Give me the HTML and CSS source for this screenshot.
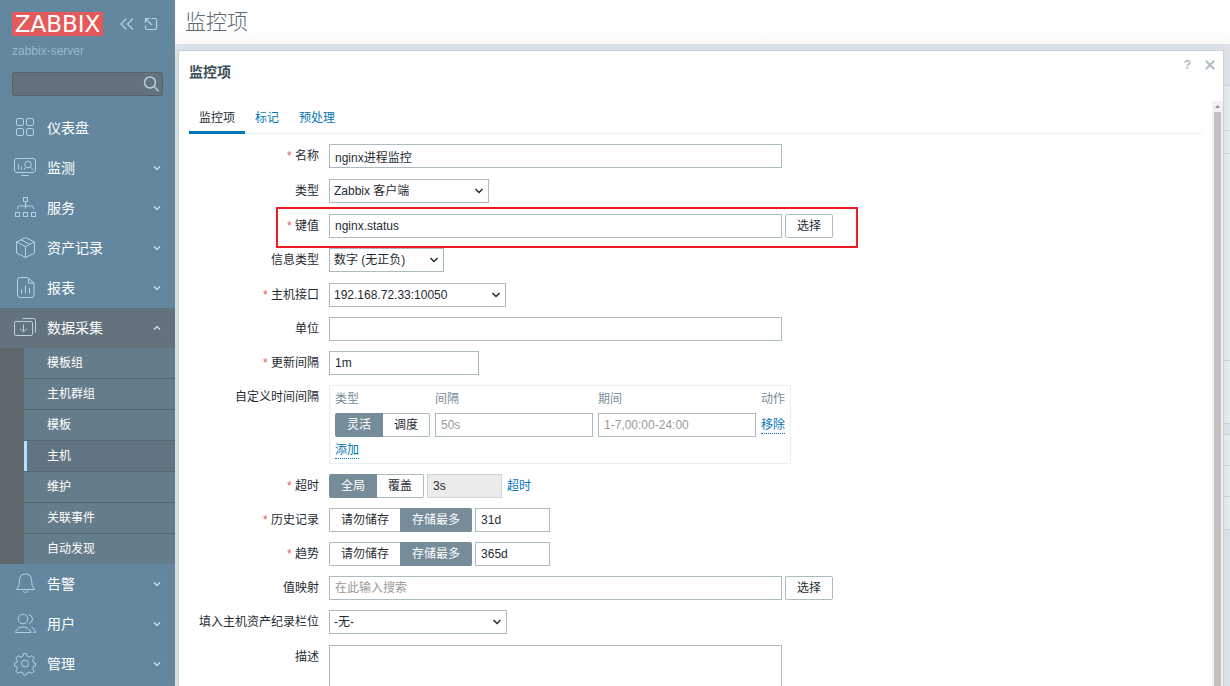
FILE: index.html
```html
<!DOCTYPE html>
<html lang="zh-CN">
<head>
<meta charset="utf-8">
<title>监控项</title>
<link rel="stylesheet" href="styles.css">
</head>
<body>
<div class="layout">
  <aside class="sidebar">
    <div class="brand">
      <a class="logo" href="#">ZABBIX</a>
      <button class="icon-btn" type="button" aria-label="收起侧栏"><svg width="16" height="16" viewBox="0 0 16 16"><path d="M7.500 2.500 2 8l5.500 5.500M14 2.500 8.500 8l5.500 5.500"/></svg></button>
      <button class="icon-btn" type="button" aria-label="隐藏侧栏"><svg width="16" height="16" viewBox="0 0 16 16"><path d="M8.500 2.500h3.500q1.500 0 1.500 1.500v8q0 1.500-1.500 1.500h-8q-1.500 0-1.500-1.500V9.500M9 9 2.500 2.500M2.500 7v-4.500h4.500"/></svg></button>
    </div>
    <div class="server">zabbix-server</div>
    <form class="search">
      <input type="text" aria-label="搜索">
      <button class="icon-btn" type="button" aria-label="搜索"><svg width="18" height="18" viewBox="0 0 18 18"><circle cx="8" cy="7.500" r="5.500"/><path d="m12 11.500 4.700 4.700"/></svg></button>
    </form>
    <nav>
      <ul class="menu">
        <li><a href="#"><svg class="ico" viewBox="0 1 24 24"><rect x="3.500" y="3.500" width="7" height="7" rx="1.500"/><rect x="13.500" y="3.500" width="7" height="7" rx="1.500"/><rect x="3.500" y="13.500" width="7" height="7" rx="1.500"/><rect x="13.500" y="13.500" width="7" height="7" rx="1.500"/></svg>仪表盘</a></li>
        <li><a href="#"><svg class="ico" viewBox="0 1 24 24"><rect x="1.500" y="3.500" width="21" height="14" rx="2.500"/><path d="M8.500 20.500h7M5.500 9v5.500M8.500 11.500v3M11.500 13v1.500"/><circle cx="15" cy="9.500" r="3.300"/><path d="m17.500 12 3 3"/></svg>监测<svg class="chev" viewBox="0 0 8 8"><path d="m1 2.500 3 3 3-3"/></svg></a></li>
        <li><a href="#"><svg class="ico" viewBox="0 1 24 24"><rect x="10.500" y="2.500" width="4" height="4"/><path d="M12.500 6.500v7M4.500 14v-1q0-2 2-2h12q2 0 2 2v1"/><rect x="2.500" y="17.500" width="4" height="4"/><rect x="10.500" y="17.500" width="4" height="4"/><rect x="18.500" y="17.500" width="4" height="4"/></svg>服务<svg class="chev" viewBox="0 0 8 8"><path d="m1 2.500 3 3 3-3"/></svg></a></li>
        <li><a href="#"><svg class="ico" viewBox="0 1 24 24"><path d="m12.500 2.500 9 4.500v11l-9 4.500-9-4.500V7zM3.500 7l9 4.500 9-4.500M12.500 11.500v11M8 4.800l9 4.500"/></svg>资产记录<svg class="chev" viewBox="0 0 8 8"><path d="m1 2.500 3 3 3-3"/></svg></a></li>
        <li><a href="#"><svg class="ico" viewBox="0 1 24 24"><path d="M14.500 2.500H7q-2.500 0-2.500 2.500v15q0 2.500 2.500 2.500h11.500q2.500 0 2.500-2.500V8zM15.500 3v5h5M8.500 14.500v4M12.500 10.500v8M16.500 13v5.500"/></svg>报表<svg class="chev" viewBox="0 0 8 8"><path d="m1 2.500 3 3 3-3"/></svg></a></li>
        <li class="open">
          <a href="#"><svg class="ico" viewBox="0 1 24 24"><rect x="1.500" y="6.500" width="18" height="14" rx="1.500"/><path d="M9.500 3.500h11q2 0 2 2V17.500M10.500 9.500v7.500M7 13.500l3.500 3.500 3.500-3.500"/></svg>数据采集<svg class="chev" viewBox="0 0 8 8"><path d="m1 5.500 3-3 3 3"/></svg></a>
          <ul class="submenu">
            <li><a href="#">模板组</a></li>
            <li><a href="#">主机群组</a></li>
            <li><a href="#">模板</a></li>
            <li class="current"><a href="#">主机</a></li>
            <li><a href="#">维护</a></li>
            <li><a href="#">关联事件</a></li>
            <li><a href="#">自动发现</a></li>
          </ul>
        </li>
        <li><a href="#"><svg class="ico" viewBox="0 1 24 24"><path d="M3.500 18.500q3-2.500 3-9 0-6.500 6-6.500t6 6.500q0 6.500 3 9zM10 20.500q2.500 2 5 0"/></svg>告警<svg class="chev" viewBox="0 0 8 8"><path d="m1 2.500 3 3 3-3"/></svg></a></li>
        <li><a href="#"><svg class="ico" viewBox="0 1 24 24"><circle cx="10" cy="8" r="4.800"/><path d="M2.500 21.500q1-5.500 7.500-5.500t8 5.500zM15.500 3.500q4 1 4 4.500t-3.500 4.500M18.500 16q3.500 1.500 4 5.500h-2"/></svg>用户<svg class="chev" viewBox="0 0 8 8"><path d="m1 2.500 3 3 3-3"/></svg></a></li>
        <li><a href="#"><svg class="ico" viewBox="0 0 24 24"><circle cx="12" cy="11.500" r="3.500"/><path d="M10.500 1.500h3l.8 2.800 2 .8 2.600-1.400 2.200 2.200-1.400 2.600.8 2 2 .5v3l-2 .5-.8 2 1.400 2.600-2.200 2.200-2.600-1.400-2 .8-.8 2.300h-3l-.8-2.300-2-.8-2.600 1.400-2.200-2.200 1.400-2.600-.8-2-2-.5v-3l2-.5.8-2-1.400-2.600 2.200-2.200 2.600 1.400 2-.8z" stroke-linejoin="round"/></svg>管理<svg class="chev" viewBox="0 0 8 8"><path d="m1 2.500 3 3 3-3"/></svg></a></li>
      </ul>
    </nav>
  </aside>

  <main class="page">
    <header class="page-head"><h1>监控项</h1></header>
    <div class="backdrop">
      <div class="panel panel-filter"><div></div><div></div><div></div><div></div></div>
      <div class="panel panel-list"><div></div><div></div><div></div></div>
    </div>

    <section class="dialog" role="dialog" aria-labelledby="dialog-title">
      <header class="dialog-head">
        <h2 id="dialog-title">监控项</h2>
        <button class="help" type="button" aria-label="帮助">?</button>
        <button class="close" type="button" aria-label="关闭"><svg width="10" height="10" viewBox="0 0 10 10"><path d="m.8.8 8.400 8.400M9.200.8.8 9.200"/></svg></button>
      </header>
      <div class="dialog-body">
        <div class="content">
          <nav class="tabs"><a class="active" href="#">监控项</a><a href="#">标记</a><a href="#">预处理</a></nav>
          <form class="form">
            <div class="row tall"><label class="req" for="name">名称</label><div class="field"><input class="wide" id="name" type="text" value="nginx进程监控"></div></div>
            <div class="row tall"><label for="type">类型</label><div class="field"><select class="s-type" id="type"><option>Zabbix 客户端</option></select></div></div>
            <div class="row marked"><label class="req" for="key">键值</label><div class="field"><input class="wide" id="key" type="text" value="nginx.status"><button class="btn" type="button">选择</button></div></div>
            <div class="row tall"><label for="vtype">信息类型</label><div class="field"><select class="s-value" id="vtype"><option>数字 (无正负)</option></select></div></div>
            <div class="row"><label class="req" for="iface">主机接口</label><div class="field"><select class="s-host" id="iface"><option>192.168.72.33:10050</option></select></div></div>
            <div class="row"><label for="units">单位</label><div class="field"><input class="wide" id="units" type="text"></div></div>
            <div class="row"><label class="req" for="delay">更新间隔</label><div class="field"><input class="medium" id="delay" type="text" value="1m"></div></div>
            <div class="row"><span class="label">自定义时间间隔</span>
              <div class="field"><div class="intervals">
                <table>
                  <thead><tr><th>类型</th><th>间隔</th><th>期间</th><th>动作</th></tr></thead>
                  <tbody><tr>
                    <td><div class="seg"><input type="radio" name="itype" id="flex" checked><label for="flex">灵活</label><input type="radio" name="itype" id="sched"><label for="sched">调度</label></div></td>
                    <td><input class="cell" type="text" placeholder="50s" aria-label="间隔"></td>
                    <td><input class="cell" type="text" placeholder="1-7,00:00-24:00" aria-label="期间"></td>
                    <td><button class="link" type="button">移除</button></td>
                  </tr></tbody>
                </table>
                <button class="link" type="button">添加</button>
              </div></div>
            </div>
            <div class="row"><span class="label req">超时</span><div class="field"><div class="seg"><input type="radio" name="timeout" id="global" checked><label for="global">全局</label><input type="radio" name="timeout" id="override"><label for="override">覆盖</label></div><input class="small" type="text" value="3s" disabled aria-label="超时"><a class="more" href="#">超时</a></div></div>
            <div class="row"><span class="label req">历史记录</span><div class="field"><div class="seg"><input type="radio" name="history" id="h-off"><label for="h-off">请勿储存</label><input type="radio" name="history" id="h-on" checked><label for="h-on">存储最多</label></div><input class="small" type="text" value="31d" aria-label="历史记录"></div></div>
            <div class="row"><span class="label req">趋势</span><div class="field"><div class="seg"><input type="radio" name="trends" id="t-off"><label for="t-off">请勿储存</label><input type="radio" name="trends" id="t-on" checked><label for="t-on">存储最多</label></div><input class="small" type="text" value="365d" aria-label="趋势"></div></div>
            <div class="row"><label for="map">值映射</label><div class="field"><input class="wide" id="map" type="text" placeholder="在此输入搜索"><button class="btn" type="button">选择</button></div></div>
            <div class="row tall"><label for="inv">填入主机资产纪录栏位</label><div class="field"><select class="s-inv" id="inv"><option>-无-</option></select></div></div>
            <div class="row"><label for="desc">描述</label><div class="field"><textarea class="wide" id="desc" rows="7"></textarea></div></div>
          </form>
        </div>
        <div class="scrollbar"><svg width="11" height="11" viewBox="0 0 11 11"><path d="m3 7 2.500-3L8 7z"/></svg><div class="thumb"></div></div>
      </div>
    </section>
  </main>
</div>
</body>
</html>
```

FILE: styles.css
```css
*, *::before, *::after { box-sizing: border-box; }
body {
  margin: 0;
  height: 100vh;
  overflow: hidden;
  color: #1f2c33;
  font: 12px/16px "Liberation Sans", "Noto Sans CJK SC", sans-serif;
}
h1, h2, ul { margin: 0; padding: 0; }
ul { list-style: none; }
a { color: #0275b8; text-decoration: none; }
button, input, select, textarea { font: inherit; color: inherit; margin: 0; }
button { cursor: pointer; }
svg { fill: none; stroke: currentColor; display: block; }

.layout { display: grid; grid-template-columns: 175px 1fr; height: 100vh; }

/* Sidebar */
.sidebar { background: #62879e; overflow: hidden; color: #fff; z-index: 1; }
.brand { display: flex; align-items: center; height: 24px; margin: 12px 12px 0; }
.logo {
  width: 91px;
  height: 24px;
  margin-right: 16px;
  background: #e45959;
  color: #fff;
  font: 23px/24px "DejaVu Sans", sans-serif;
  text-align: center;
}
.icon-btn { padding: 0; border: 0; background: none; color: #b5d0de; }
.icon-btn svg { stroke-width: 1.2; }
.brand .icon-btn + .icon-btn { margin-left: 8px; }
.server { margin: 7px 12px 0; color: #9bb8c9; }
.search {
  display: flex;
  align-items: center;
  height: 24px;
  margin: 13px 12px 12px;
  padding-right: 2px;
  border: 1px solid #596167;
  border-radius: 2px;
  background: #62737e;
}
.search input { flex: 1; min-width: 0; border: 0; background: none; outline: 0; }
.search svg { stroke-width: 1.5; }
.menu > li > a {
  display: flex;
  align-items: center;
  height: 40px;
  padding: 0 14px 0 13px;
  color: #fff;
  font-size: 14px;
}
.ico { width: 24px; height: 24px; margin-right: 10px; color: #b3d2e3; }
.chev { width: 8px; height: 8px; margin-left: auto; color: #dce8ee; stroke-width: 1.2; }
.open > a { background: #62737e; }
.submenu { padding-left: 24px; background: #5f686d; }
.submenu li + li { border-top: 1px solid #586870; }
.submenu a {
  display: block;
  height: 30px;
  padding-left: 23px;
  background: #657c8a;
  color: #fff;
  line-height: 30px;
}
.submenu .current a { padding-left: 20px; border-left: 3px solid #b0e0ff; background: #617482; }

/* Page behind the dialog */
.page {
  position: relative;
  display: grid;
  grid-template-rows: 45px 1fr;
  min-width: 0;
  overflow: hidden;
  background: #dfe5e9;
}
.page-head { padding: 9px 10px; background: linear-gradient(#fff 60%, #f8fafa); border-bottom: 1px solid #e2e7ea; }
.page-head h1 { color: #5d6870; font-size: 21px; line-height: 26px; font-weight: 300; }
.backdrop { display: flex; flex-direction: column; gap: 10px; padding: 40px 0 0 10px; }
.panel { display: grid; background: #eaeff1; border-bottom: 1px solid #d0d9dd; }
.panel div { border-top: 1px solid #d0d9dd; }
.panel-filter { grid-template-rows: 45px 23px 207px 63px; }
.panel-list { grid-template-rows: 31px 31px 33px; }

/* Dialog */
.dialog {
  position: absolute;
  inset: 50px 6px 0 3px;
  display: flex;
  flex-direction: column;
  border: 1px solid #c6d3d9;
  border-bottom: 0;
  background: #fff;
  box-shadow: 0 0 10px rgba(80, 110, 125, 0.12);
}
.dialog-head { display: flex; align-items: flex-start; height: 50px; padding: 12px 8px 0 10px; }
.dialog-head h2 { flex: 1; color: #3c4e58; font-size: 14px; line-height: 18px; font-weight: 700; }
.dialog-head button { display: flex; align-items: center; height: 3px; padding: 0; border: 0; background: none; color: #acbdc5; line-height: 0; }
.dialog-head .help { margin-right: 14px; font-size: 12px; font-weight: 700; }
.close svg { stroke-width: 2; }
.dialog-body { flex: 1; display: flex; min-height: 0; overflow: hidden; }
.content { flex: 1; min-width: 0; padding: 0 10px; }
.tabs { display: flex; height: 33px; border-bottom: 1px solid #ebeef0; }
.tabs a { height: 33px; padding: 9px 10px 0; }
.tabs .active { color: #1f2c33; border-bottom: 3px solid #0275b8; }
.scrollbar { width: 11px; background: #f1f1f1; color: #8b8b8b; }
.scrollbar svg { fill: currentColor; stroke: none; }
.thumb { height: 100%; margin: 0 2px; background: #c1c1c1; }

/* Form */
.form { display: flex; flex-direction: column; gap: 10px; padding-top: 10px; }
.row { position: relative; display: grid; grid-template-columns: 130px 1fr; gap: 10px; }
.tall { min-height: 25px; }
.row > label, .label { padding-top: 4px; text-align: right; white-space: nowrap; }
.req::before { content: "* "; color: #e45959; }
.field { display: flex; align-items: flex-start; gap: 3px; min-width: 0; }
.field input[type="text"], select, textarea, .btn {
  height: 24px;
  border: 1px solid #acbbc2;
  border-radius: 0;
  background: #fff;
  outline: 0;
}
.field input[type="text"] { padding: 0 5px; }
.field input[type="text"]:disabled { background: #ebebeb; border-color: #ccd5d9; }
::placeholder { color: #9a9a9a; opacity: 1; }
.field .wide { width: 453px; }
.field textarea { height: 120px; resize: none; }
.field .medium { width: 150px; }
.field .small { width: 75px; }
.field .cell { width: 158px; }
select {
  padding: 0 18px 0 4px;
  appearance: none;
  background: #fff url("data:image/svg+xml,%3Csvg xmlns='http://www.w3.org/2000/svg' width='10' height='8' viewBox='0 0 10 8'%3E%3Cpath d='m1.500 2 3.500 3.500L8.500 2' fill='none' stroke='%231f2c33' stroke-width='1.500'/%3E%3C/svg%3E") no-repeat right 4px center;
}
.s-type { width: 160px; }
.s-value { width: 115px; }
.s-host { width: 177px; }
.s-inv { width: 178px; }
.field .btn { width: 48px; padding: 0; border-radius: 2px; }
.marked::after {
  content: "";
  position: absolute;
  inset: -7px auto -10px 87px;
  width: 582px;
  border: 2px solid #ed1c24;
  pointer-events: none;
}
.seg { display: flex; }
.seg input { position: absolute; opacity: 0; pointer-events: none; }
.seg label {
  height: 24px;
  padding: 0 11px;
  border: 1px solid #acbbc2;
  line-height: 22px;
  white-space: nowrap;
}
.seg label:first-of-type { border-right: 0; border-radius: 2px 0 0 2px; }
.seg label:last-of-type { border-left: 0; border-radius: 0 2px 2px 0; }
.seg input:checked + label { padding: 0 12px; border-width: 1px 0; border-color: #768d99; background: #768d99; color: #fff; }
.intervals { width: 462px; height: 79px; padding: 5px; border: 1px solid #ebeef0; }
.intervals table { border-collapse: collapse; }
.intervals th { padding: 0 0 6px; color: #768d99; font-weight: 400; line-height: 16px; text-align: left; }
.intervals td { padding: 0 5px 0 0; }
.intervals td:last-child { padding: 0; }
.intervals td:first-child .seg { width: 95px; }
.link {
  display: block;
  height: 17px;
  padding: 0;
  border: 0;
  border-bottom: 1px dotted #0275b8;
  background: none;
  color: #0275b8;
  line-height: 16px;
}
.intervals > .link { margin-top: 5px; }
.more { padding: 4px 0 0 2px; }
```
